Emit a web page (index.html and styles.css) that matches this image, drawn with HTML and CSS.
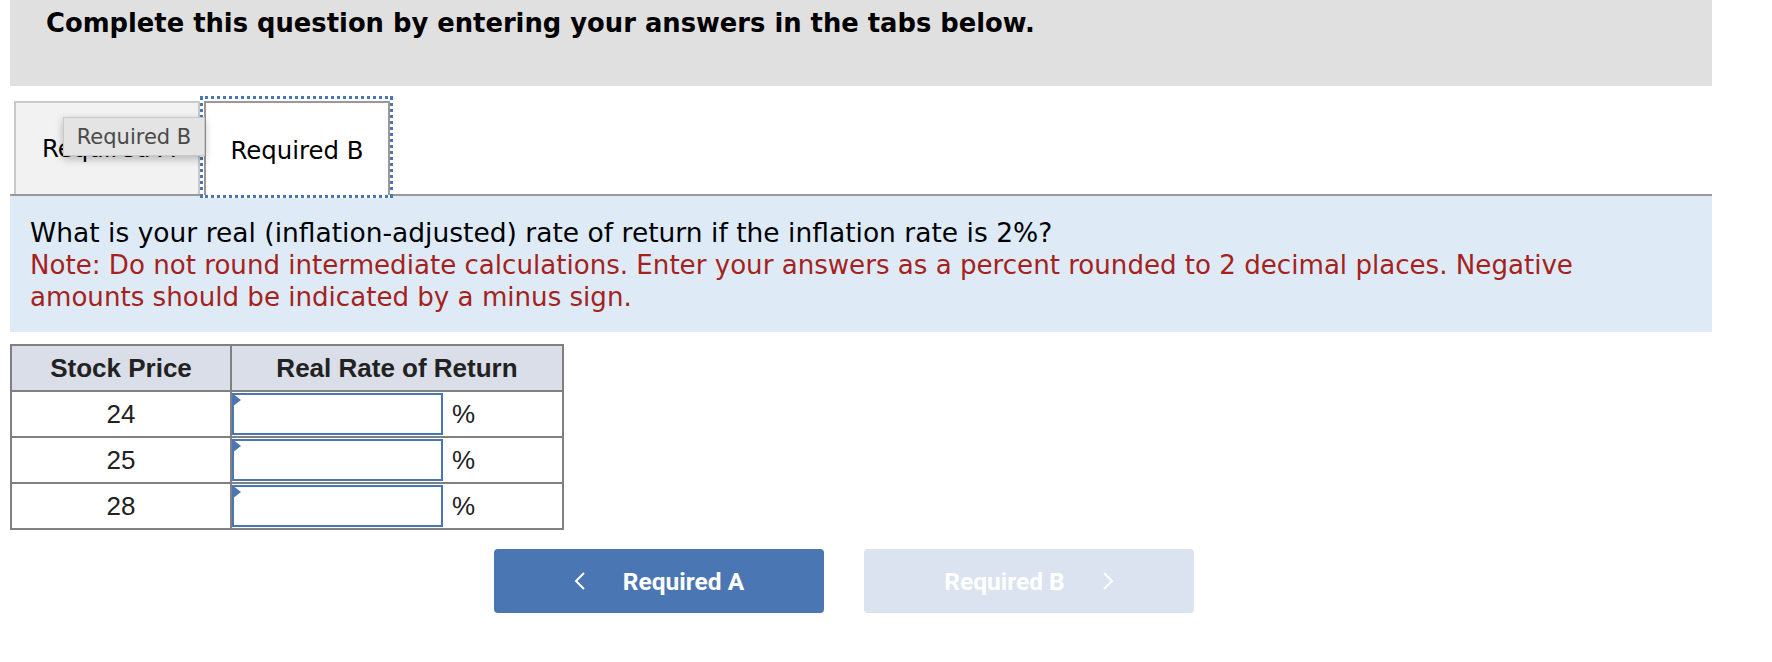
FILE: index.html
```html
<!DOCTYPE html>
<html>
<head>
<meta charset="utf-8">
<link rel="stylesheet" href="styles.css">
</head>
<body>
<div class="page">
  <div class="header">
    <h1 class="title">Complete this question by entering your answers in the tabs below.</h1>
  </div>
  <div class="tabs">
    <div class="tab tab-a">Required A</div>
    <div class="tab-b-wrap"><div class="tab tab-b">Required B</div></div>
    <div class="tooltip">Required B</div>
  </div>
  <div class="panel">
    <p class="question">What is your real (inflation-adjusted) rate of return if the inflation rate is 2%?</p>
    <p class="note">Note: Do not round intermediate calculations. Enter your answers as a percent rounded to 2 decimal places. Negative amounts should be indicated by a minus sign.</p>
  </div>
  <table class="grid">
    <thead>
      <tr><th class="c1">Stock Price</th><th class="c2" colspan="2">Real Rate of Return</th></tr>
    </thead>
    <tbody>
      <tr><td class="num">24</td><td class="inp"><div class="box"><span class="flag"></span></div></td><td class="pct">%</td></tr>
      <tr><td class="num">25</td><td class="inp"><div class="box"><span class="flag"></span></div></td><td class="pct">%</td></tr>
      <tr><td class="num">28</td><td class="inp"><div class="box"><span class="flag"></span></div></td><td class="pct">%</td></tr>
    </tbody>
  </table>
  <div class="nav">
    <div class="btn btn-prev">
      <svg class="chev" width="12" height="20" viewBox="0 0 12 20"><path d="M10 2 L2 10 L10 18" fill="none" stroke="#fff" stroke-width="2"/></svg>
      <span>Required A</span>
    </div>
    <div class="btn btn-next">
      <span>Required B</span>
      <svg class="chev" width="12" height="20" viewBox="0 0 12 20"><path d="M2 2 L10 10 L2 18" fill="none" stroke="#fff" stroke-width="2"/></svg>
    </div>
  </div>
</div>
</body>
</html>
```
FILE: styles.css
```css
html, body {
  margin: 0;
  padding: 0;
  background: #fff;
}
.page {
  width: 1702px;
  margin-left: 10px;
  font-family: "DejaVu Sans", Verdana, sans-serif;
}
.header {
  background: #e0e0e0;
  height: 86px;
  box-sizing: border-box;
  padding: 8px 0 0 36px;
}
.title {
  margin: 0;
  font-size: 25.8px;
  font-weight: bold;
  color: #000;
  line-height: 30px;
  white-space: nowrap;
}
.tabs {
  position: relative;
  display: flex;
  align-items: flex-end;
  height: 110px;
  box-sizing: border-box;
  border-bottom: 2px solid #999;
  padding-left: 4px;
}
.tab {
  box-sizing: border-box;
  display: flex;
  align-items: center;
  font-size: 24.4px;
  color: #000;
}
.tab-a {
  width: 186px;
  height: 93px;
  background: #f2f2f2;
  border: 2px solid #c8c8c8;
  border-bottom: none;
  padding-left: 26px;
  overflow: hidden;
  white-space: nowrap;
}
.tab-b-wrap {
  box-sizing: border-box;
  width: 193px;
  height: 102px;
  border: 3px dotted #4a76b4;
  padding: 2px 0 0 1px;
  margin-bottom: -4px;
  background: #fff;
}
.tab-b {
  width: 186px;
  height: 94px;
  background: #fff;
  border: 2px solid #999;
  border-bottom: none;
  justify-content: center;
  padding-top: 2px;
}
.tooltip {
  position: absolute;
  left: 53px;
  top: 31px;
  height: 39px;
  width: 142px;
  box-sizing: border-box;
  background: #e4e4e4;
  border: 1px solid #c9c9c9;
  color: #4a4a4a;
  font-size: 21px;
  display: flex;
  align-items: center;
  justify-content: center;
  box-shadow: 0 3px 8px rgba(0,0,0,0.25);
}
.panel {
  background: #deebf7;
  height: 136px;
  box-sizing: border-box;
  padding: 21px 20px 0 20px;
  font-size: 26.5px;
  line-height: 32px;
}
.question {
  margin: 0;
  color: #000;
}
.note {
  margin: 0;
  color: #a5221c;
  width: 1570px;
  font-size: 26.1px;
}
.grid {
  margin-top: 12px;
  border-collapse: collapse;
  font-family: "Liberation Sans", Arial, sans-serif;
  font-size: 26px;
  color: #222;
}
.grid th, .grid td {
  border: 2px solid #808080;
  padding: 0;
}
.grid th {
  background: #d9dee8;
  height: 44px;
  font-weight: bold;
}
.c1 { width: 218px; }
.c2 { width: 330px; }
.grid td {
  height: 44px;
}
.num { text-align: center; }
.inp {
  width: 212px;
  border-right: none !important;
  padding: 0;
}
.box {
  position: relative;
  box-sizing: border-box;
  height: 42px;
  margin: 1px 1px 1px 0;
  border: 2px solid #4a76b4;
  background: #fff;
}
.flag {
  position: absolute;
  left: -2px;
  top: -2px;
  width: 0;
  height: 0;
  border-top: 7px solid transparent;
  border-bottom: 7px solid transparent;
  border-left: 9px solid #4a76b4;
}
.pct {
  border-left: none !important;
  padding-left: 8px !important;
  width: 110px;
}
.nav {
  display: flex;
  gap: 40px;
  margin-left: 484px;
  margin-top: 19px;
}
.btn {
  width: 330px;
  height: 64px;
  border-radius: 4px;
  display: flex;
  align-items: center;
  justify-content: center;
  gap: 37px;
  color: #fff;
  font-family: Roboto, "Liberation Sans", sans-serif;
  font-weight: bold;
  font-size: 24.5px;
}
.btn-prev { background: #4a76b4; }
.btn-next { background: #dae3ef; }
```
